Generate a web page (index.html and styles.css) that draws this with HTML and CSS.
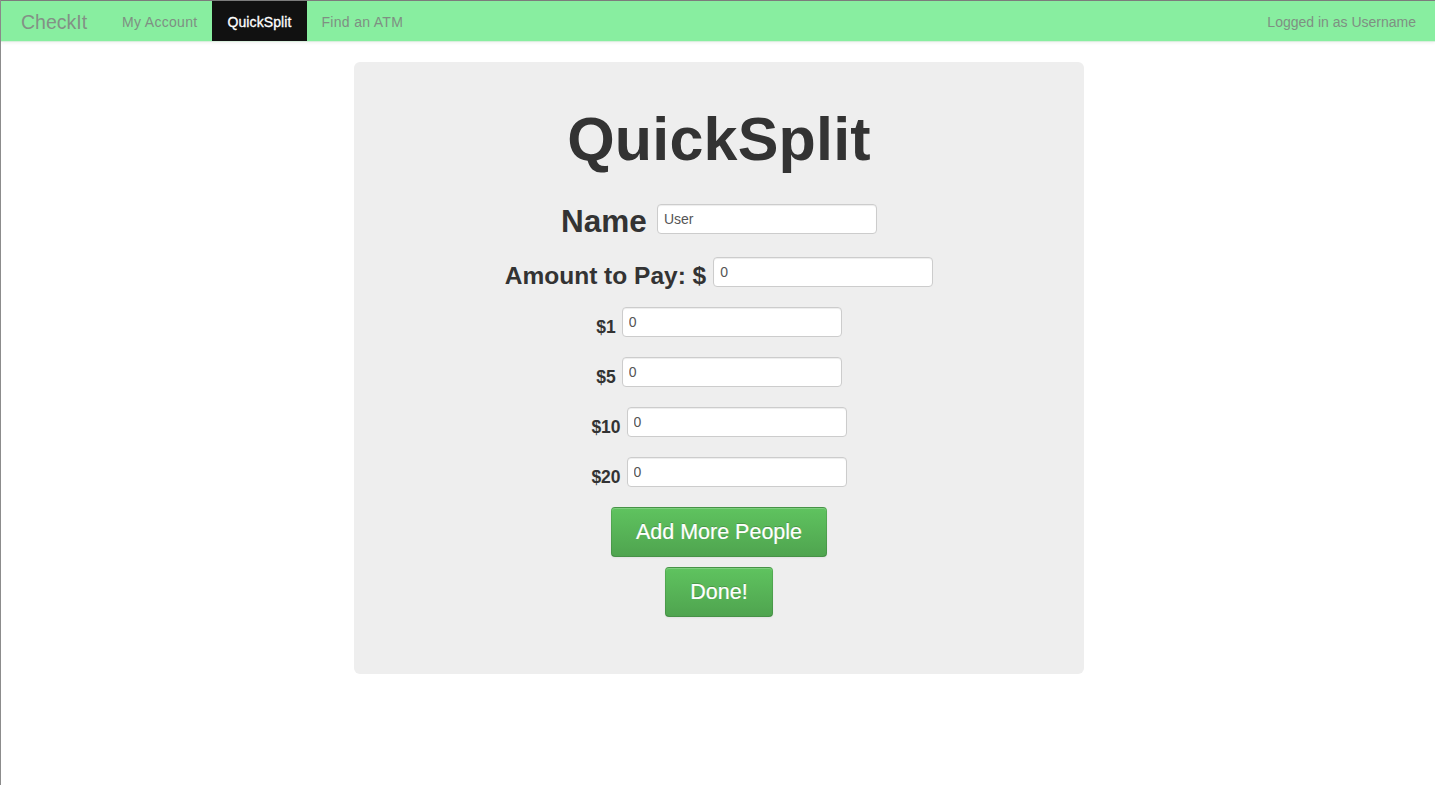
FILE: index.html
```html
<!DOCTYPE html>
<html>
<head>
<meta charset="utf-8">
<title>CheckIt - QuickSplit</title>
<link rel="stylesheet" href="styles.css">
</head>
<body>
<div class="page">
  <header class="navbar">
    <div class="navbar-inner">
      <a class="brand" href="#">CheckIt</a>
      <nav class="nav">
        <a class="nav-link" href="#">My Account</a>
        <a class="nav-link active" href="#">QuickSplit</a>
        <a class="nav-link" href="#">Find an ATM</a>
      </nav>
      <span class="navbar-text">Logged in as Username</span>
    </div>
  </header>

  <main class="main">
    <section class="hero">
      <h1 class="title">QuickSplit</h1>
      <form class="split-form">
        <div class="row row-name">
          <label class="lbl lbl-h2">Name</label>
          <input class="field" type="text" value="User">
        </div>
        <div class="row row-amount">
          <label class="lbl lbl-h3">Amount to Pay: $</label>
          <input class="field" type="text" value="0">
        </div>
        <div class="row row-bill">
          <label class="lbl lbl-h4">$1</label>
          <input class="field" type="text" value="0">
        </div>
        <div class="row row-bill">
          <label class="lbl lbl-h4">$5</label>
          <input class="field" type="text" value="0">
        </div>
        <div class="row row-bill">
          <label class="lbl lbl-h4">$10</label>
          <input class="field" type="text" value="0">
        </div>
        <div class="row row-bill">
          <label class="lbl lbl-h4">$20</label>
          <input class="field" type="text" value="0">
        </div>
        <button class="btn btn-add" type="button">Add More People</button>
        <button class="btn btn-done" type="button">Done!</button>
      </form>
    </section>
  </main>
</div>
</body>
</html>
```

FILE: styles.css
```css
* { box-sizing: border-box; }

html, body {
  margin: 0;
  padding: 0;
  background: #ffffff;
}

body {
  font-family: "Liberation Sans", Arial, Helvetica, sans-serif;
  font-size: 14px;
  color: #333333;
}

.page {
  min-height: 785px;
  border-left: 1px solid #8c8c8c;
}

/* ---------- Navbar ---------- */
.navbar {
  border-top: 1px solid #7d7d7d;
}

.navbar-inner {
  display: flex;
  align-items: stretch;
  height: 41px;
  background: #88eea0;
  border-bottom: 1px solid #d9eedd;
  box-shadow: 0 1px 3px rgba(0, 0, 0, 0.06);
}

.brand {
  display: block;
  padding: 10px 20px 0 20px;
  font-size: 19.5px;
  line-height: 22px;
  color: #839186;
  text-decoration: none;
}

.nav {
  display: flex;
}

.nav-link {
  display: block;
  padding: 11px 15px 0 15px;
  font-size: 14px;
  line-height: 20px;
  letter-spacing: 0.3px;
  color: #7f8f83;
  text-decoration: none;
}

.nav-link.active {
  background: #111111;
  color: #ffffff;
  letter-spacing: 0.1px;
  -webkit-text-stroke: 0.3px #ffffff;
}

.navbar-text {
  margin-left: auto;
  padding: 11px 19px 0 0;
  font-size: 14px;
  line-height: 20px;
  color: #7f8f83;
}

/* ---------- Main ---------- */
.main {
  display: flex;
  justify-content: center;
  padding: 20px 0 0 2px;
}

.hero {
  width: 730px;
  height: 612px;
  background: #eeeeee;
  border-radius: 6px;
  padding-top: 47px;
  display: flex;
  flex-direction: column;
  align-items: center;
}

.title {
  margin: 0;
  font-size: 61px;
  line-height: 60px;
  font-weight: bold;
  letter-spacing: 0.2px;
  color: #333333;
}

.split-form {
  display: flex;
  flex-direction: column;
  align-items: center;
  margin-top: 35px;
}

.row {
  display: flex;
  align-items: flex-end;
  height: 30px;
}

.row-name { gap: 10px; }
.row-amount { gap: 7px; margin-top: 23px; }
.row-bill { gap: 6px; margin-top: 20px; }

.lbl {
  font-weight: bold;
  color: #333333;
  white-space: nowrap;
}

.lbl-h2 { font-size: 31.5px; line-height: 26px; }
.lbl-h3 { font-size: 24.5px; line-height: 23px; }
.lbl-h4 { font-size: 17.5px; line-height: 20px; }

.field {
  width: 220px;
  height: 30px;
  padding: 4px 6px;
  font-family: "Liberation Sans", Arial, Helvetica, sans-serif;
  font-size: 14px;
  line-height: 20px;
  color: #555555;
  background: #ffffff;
  border: 1px solid #cccccc;
  border-radius: 4px;
  box-shadow: inset 0 1px 1px rgba(0, 0, 0, 0.075);
}

/* ---------- Buttons ---------- */
.btn {
  display: block;
  height: 50px;
  padding: 0 24px;
  font-family: "Liberation Sans", Arial, Helvetica, sans-serif;
  font-size: 21.5px;
  line-height: 48px;
  color: #ffffff;
  -webkit-text-stroke: 0.2px #ffffff;
  text-shadow: 0 -1px 0 rgba(0, 0, 0, 0.2);
  background: linear-gradient(to bottom, #5fc35f, #4fa44f);
  border: 1px solid #4a9a4a;
  border-color: rgba(0, 0, 0, 0.1) rgba(0, 0, 0, 0.1) rgba(0, 0, 0, 0.25);
  border-radius: 4px;
  box-shadow: inset 0 1px 0 rgba(255, 255, 255, 0.2), 0 1px 2px rgba(0, 0, 0, 0.05);
  cursor: pointer;
}

.btn-add { margin-top: 20px; }
.btn-done { margin-top: 10px; }
```
